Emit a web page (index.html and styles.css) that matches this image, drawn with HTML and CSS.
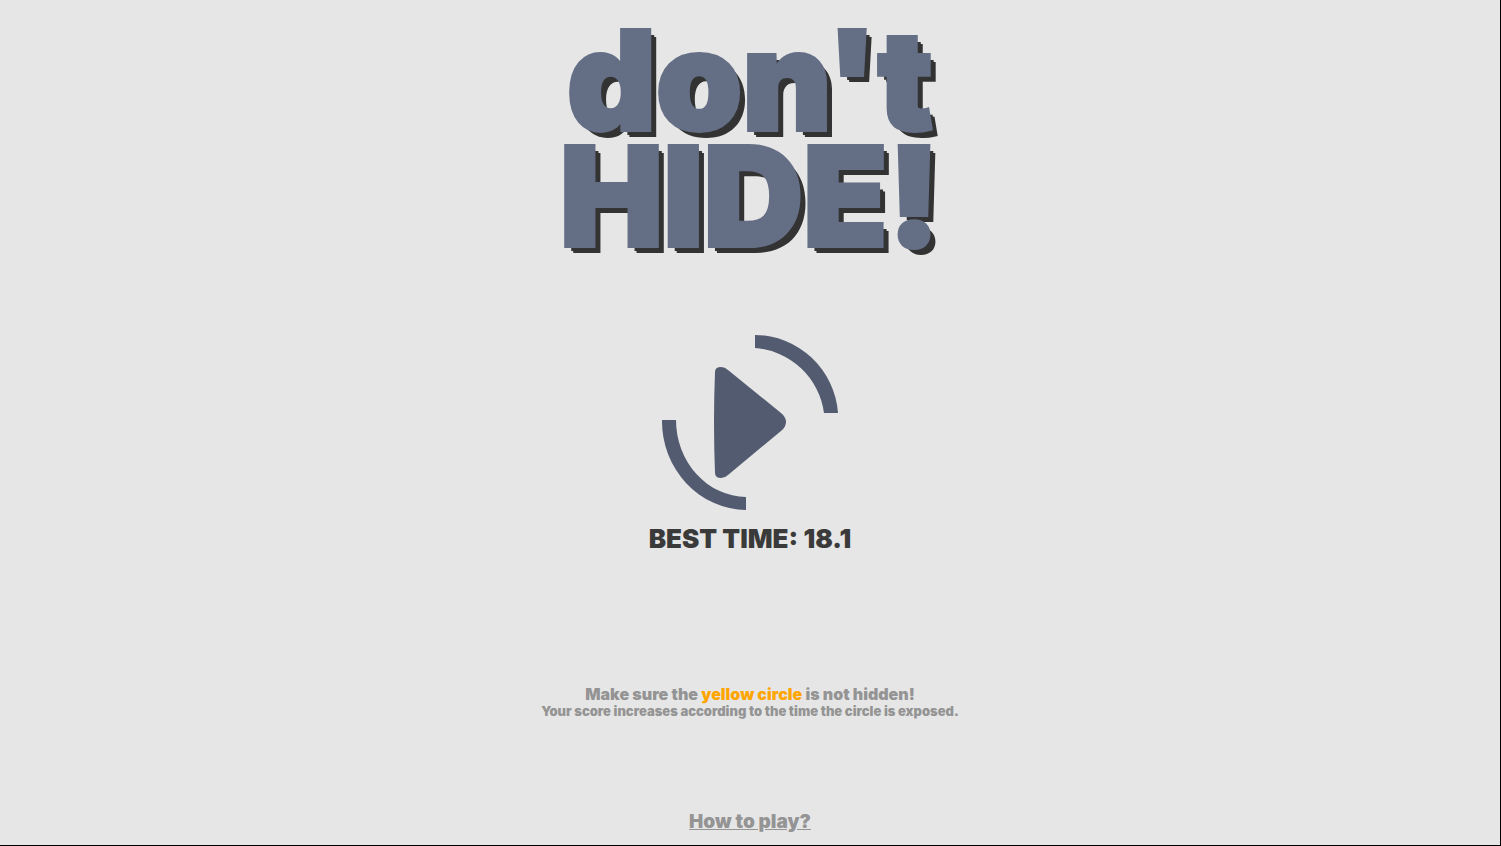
FILE: index.html
```html
<!DOCTYPE html>
<html lang="en">
<head>
    <meta charset="UTF-8">
    <meta name="viewport" content="width=device-width, initial-scale=1.0">
    <title>don't HIDE!</title>
    <link rel="stylesheet" href="styles.css">
</head>
<body>

<main class="menu">
    <h1 class="title">don't<br>HIDE!</h1>

    <button class="play-button" type="button" aria-label="Play">
        <svg class="play-icon" viewBox="0 0 176 176" aria-hidden="true">
            <path d="M93 0A84 84 0 0 1 176 78H162A75 75 0 0 0 93 13Z"/>
            <path d="M0 85H14A71 77 0 0 0 84 162V175A85 89 0 0 1 0 85Z"/>
            <path d="M53 37Q53 32 59 32Q63 32 66 35L119 78Q124 82 124 87Q124 92 119 96L66 140Q63 143 59 143Q53 143 53 138Q51 87 53 37Z"/>
        </svg>
    </button>

    <p class="best-time">BEST TIME: 18.1</p>

    <div class="info">
        <p class="goal">Make sure the <span class="yellow">yellow circle</span> is not hidden!</p>
        <p class="score-hint">Your score increases according to the time the circle is exposed.</p>
    </div>

    <a class="how-to-play" href="#">How to play?</a>
</main>

</body>
</html>
```
FILE: styles.css
```css
* {
    box-sizing: border-box;
}

body {
    margin: 0;
    font-family: Inter, 'Noto Sans', sans-serif;
    font-weight: 900;
    background: #e6e6e6;
    color: #949494;
}

.menu {
    display: flex;
    flex-direction: column;
    align-items: center;
    min-height: 100vh;
    padding: 22px 0 11px;
    border-right: 1px solid #000;
    border-bottom: 1px solid #000;
    text-align: center;
}

.title {
    margin: 0;
    font-size: 138px;
    font-weight: 900;
    line-height: 116px;
    color: #646e85;
    -webkit-text-stroke: 4px #646e85;
    text-shadow: 5px 5px 0 #333, 7px 7px 0 #333;
}

.play-button {
    margin-top: 81px;
    padding: 0;
    border: none;
    background: none;
    cursor: pointer;
}

.play-icon {
    display: block;
    width: 176px;
    height: 176px;
    fill: #535b70;
}

p {
    margin: 0;
}

.best-time {
    margin-top: 12px;
    font-size: 26px;
    line-height: 32px;
    color: #3a3a3a;
}

.info {
    margin-top: 129px;
}

.goal {
    font-size: 16px;
    line-height: 20px;
}

.yellow {
    color: #ffa500;
}

.score-hint {
    font-size: 13px;
    line-height: 14px;
}

.how-to-play {
    margin-top: auto;
    font-size: 19px;
    line-height: 24px;
    color: #949494;
}
```
